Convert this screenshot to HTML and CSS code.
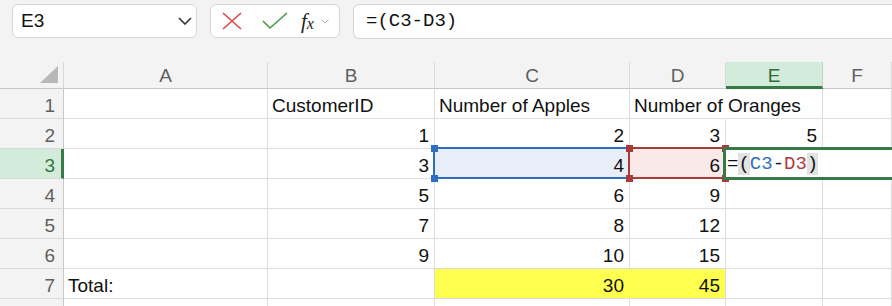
FILE: index.html
```html
<!DOCTYPE html>
<html lang="en">
<head>
    <meta charset="UTF-8">
    <title>Sheet</title>
    <link rel="stylesheet" href="styles.css">
</head>
<body>

<header class="toolbar">
    <div class="namebox">
        <span>E3</span>
        <svg width="14" height="8" viewBox="0 0 14 8"><polyline points="1,1 7,7 13,1" fill="none" stroke="#333" stroke-width="1.6"/></svg>
    </div>
    <div class="fxbox">
        <svg class="icon-x" width="20" height="18" viewBox="0 0 20 18"><path d="M1 1 L19 17 M19 1 L1 17" stroke="#d9474a" stroke-width="1.6" fill="none"/></svg>
        <svg class="icon-ok" width="26" height="18" viewBox="0 0 26 18"><polyline points="1,9 8,16 25,1" fill="none" stroke="#3f9a45" stroke-width="1.6"/></svg>
        <span class="fx"><i>f</i><sub>x</sub></span>
        <svg class="icon-more" width="8" height="5" viewBox="0 0 8 5"><polyline points="0.5,0.5 4,4 7.5,0.5" fill="none" stroke="#aaa" stroke-width="1"/></svg>
    </div>
    <div class="formula">=(C3-D3)</div>
</header>

<main class="sheet">
    <!-- column headers -->
    <div class="corner">
        <svg width="20" height="19" viewBox="0 0 20 19"><polygon points="19,1 19,18 1,18" fill="#b8b8b8"/></svg>
    </div>
    <div class="colhead">A</div>
    <div class="colhead">B</div>
    <div class="colhead">C</div>
    <div class="colhead">D</div>
    <div class="colhead active">E</div>
    <div class="colhead">F</div>

    <!-- row 1 -->
    <div class="rowhead">1</div>
    <div class="cell"></div>
    <div class="cell">CustomerID</div>
    <div class="cell">Number of Apples</div>
    <div class="cell overflow">Number of Oranges</div>
    <div class="cell"></div>
    <div class="cell"></div>

    <!-- row 2 -->
    <div class="rowhead">2</div>
    <div class="cell"></div>
    <div class="cell num">1</div>
    <div class="cell num">2</div>
    <div class="cell num">3</div>
    <div class="cell num">5</div>
    <div class="cell"></div>

    <!-- row 3 -->
    <div class="rowhead active">3</div>
    <div class="cell"></div>
    <div class="cell num">3</div>
    <div class="cell num ref-blue">
        4
        <span class="handle tl"></span><span class="handle bl"></span>
    </div>
    <div class="cell num ref-red">
        6
        <span class="handle tl"></span><span class="handle bl"></span>
        <span class="handle tr"></span><span class="handle br"></span>
    </div>
    <div class="cell editing">
        <div class="editor">=<span class="paren">(</span><span class="c-blue">C3</span>-<span class="c-red">D3</span><span class="paren">)</span></div>
    </div>
    <div class="cell"></div>

    <!-- row 4 -->
    <div class="rowhead">4</div>
    <div class="cell"></div>
    <div class="cell num">5</div>
    <div class="cell num">6</div>
    <div class="cell num">9</div>
    <div class="cell"></div>
    <div class="cell"></div>

    <!-- row 5 -->
    <div class="rowhead">5</div>
    <div class="cell"></div>
    <div class="cell num">7</div>
    <div class="cell num">8</div>
    <div class="cell num">12</div>
    <div class="cell"></div>
    <div class="cell"></div>

    <!-- row 6 -->
    <div class="rowhead">6</div>
    <div class="cell"></div>
    <div class="cell num">9</div>
    <div class="cell num">10</div>
    <div class="cell num">15</div>
    <div class="cell"></div>
    <div class="cell"></div>

    <!-- row 7 -->
    <div class="rowhead">7</div>
    <div class="cell">Total:</div>
    <div class="cell"></div>
    <div class="cell num yellow joined">30</div>
    <div class="cell num yellow">45</div>
    <div class="cell"></div>
    <div class="cell"></div>

    <!-- row 8, only its top edge shows -->
    <div class="rowhead"></div>
    <div class="cell"></div>
    <div class="cell"></div>
    <div class="cell"></div>
    <div class="cell"></div>
    <div class="cell"></div>
    <div class="cell"></div>
</main>

</body>
</html>
```

FILE: styles.css
```css
/* Reset */
* {
    margin: 0;
    padding: 0;
    box-sizing: border-box;
}

body {
    font-family: "Liberation Sans", Arial, sans-serif;
    background: #f3f3f3;
    color: #111;
    overflow: hidden;
    height: 306px;
}

/* Toolbar */
.toolbar {
    display: flex;
    align-items: flex-start;
    height: 62px;
    padding: 4px 0 0 12px;
}

.namebox {
    width: 185px;
    height: 34px;
    background: #fff;
    border: 1px solid #d6d6d6;
    border-radius: 6px;
    display: flex;
    align-items: center;
    justify-content: space-between;
    padding: 0 4px 0 8px;
    font-size: 19px;
}

.fxbox {
    width: 130px;
    height: 34px;
    margin-left: 13px;
    background: #fff;
    border: 1px solid #d6d6d6;
    border-radius: 6px;
    display: flex;
    align-items: center;
    padding-left: 11px;
}

.icon-ok {
    margin-left: 20px;
}

.fx {
    margin-left: 13px;
    font-family: "Liberation Serif", serif;
    font-size: 21px;
    color: #222;
    line-height: 1;
}

.fx sub {
    font-size: 16px;
    font-style: italic;
    vertical-align: -1px;
}

.icon-more {
    margin-left: 7px;
}

.formula {
    flex: 1;
    height: 35px;
    margin-left: 13px;
    background: #fff;
    border: 1px solid #d6d6d6;
    border-right: none;
    border-radius: 6px 0 0 6px;
    padding-left: 12px;
    font-family: "Liberation Mono", monospace;
    font-size: 19px;
    line-height: 33px;
}

/* Sheet grid */
.sheet {
    display: grid;
    grid-template-columns: 64px 204px 167px 195px 96px 97px 1fr;
    grid-template-rows: 27px repeat(7, 30px) 30px;
    font-size: 19px;
}

.corner {
    border-right: 1px solid #d8d8d8;
    border-bottom: 1px solid #c8c8c8;
    display: flex;
    align-items: flex-end;
    justify-content: flex-end;
    padding: 0 4px 4px 0;
}

.corner svg {
    display: block;
}

.colhead {
    border-right: 1px solid #dadada;
    border-bottom: 1px solid #c8c8c8;
    color: #5f5f5f;
    display: flex;
    align-items: center;
    justify-content: center;
    padding-top: 2px;
}

.colhead.active {
    background: #d3ebdb;
    color: #2f6b3c;
    border-right-color: #b3d9bf;
    border-bottom: 3px solid #377a47;
    padding-top: 4px;
}

.rowhead {
    border-right: 1px solid #c8c8c8;
    border-bottom: 1px solid #dadada;
    color: #5f5f5f;
    display: flex;
    align-items: center;
    justify-content: flex-end;
    padding: 4px 8px 0 0;
}

.rowhead.active {
    background: #d3ebdb;
    color: #2f7a3f;
    border-right: 3px solid #377a47;
    padding-right: 6px;
}

.cell {
    position: relative;
    background: #fff;
    border-right: 1px solid #dddddd;
    border-bottom: 1px solid #dddddd;
    display: flex;
    align-items: center;
    padding: 4px 4px 0;
    white-space: nowrap;
}

/* long header text runs into the next column */
.cell.overflow {
    border-right-color: #fff;
    z-index: 1;
}

.cell.num {
    justify-content: flex-end;
    padding-right: 5px;
}

.yellow {
    background: #ffff4f;
}

.yellow.joined {
    border-right-color: #ffff4f;
}

/* Formula references */
.ref-blue {
    background: #e8eef7;
}

.ref-blue::after,
.ref-red::after {
    content: "";
    position: absolute;
    top: -2px;
    left: -2px;
    right: -2px;
    bottom: -1px;
    border: 2px solid #2e6ec2;
    pointer-events: none;
}

.ref-red {
    background: #f9e9e9;
}

.ref-red::after {
    border-color: #a83a37;
}

.handle {
    position: absolute;
    width: 7px;
    height: 7px;
    background: #2e6ec2;
    z-index: 2;
}

.ref-red .handle {
    background: #a83a37;
}

.handle.tl { top: -4px; left: -4px; }
.handle.bl { bottom: -4px; left: -4px; }
.handle.tr { top: -4px; right: -4px; }
.handle.br { bottom: -4px; right: -4px; }

/* Cell in edit mode */
.editing {
    z-index: 3;
}

.editor {
    position: absolute;
    top: -2px;
    left: -3px;
    width: 172px;
    height: 33px;
    background: #fff;
    border: 3px solid #377a47;
    border-right: none;
    font-family: "Liberation Mono", monospace;
    font-size: 19px;
    line-height: 29px;
    padding-left: 1px;
}

.paren {
    background: #e2e2e2;
}

.c-blue {
    color: #2e6ec2;
}

.c-red {
    color: #b0393a;
}
```
